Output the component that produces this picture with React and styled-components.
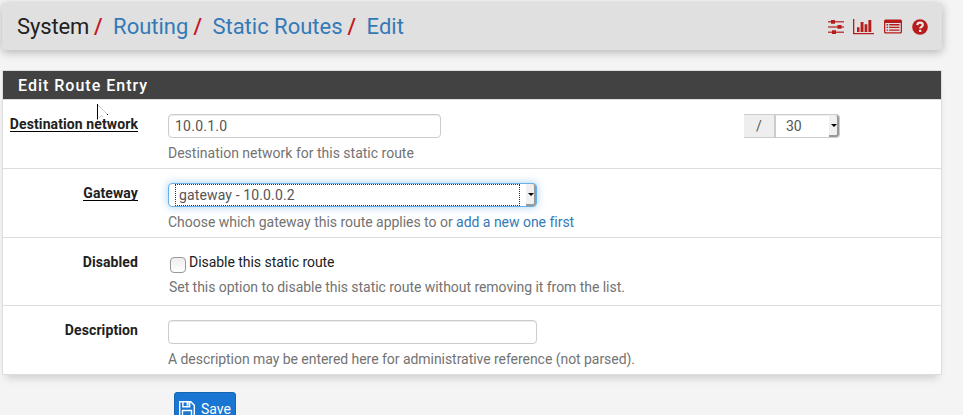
import React from "react";
import styled, { createGlobalStyle, css } from "styled-components";

const Global = createGlobalStyle`
  *, *::before, *::after { box-sizing: border-box; }
  html, body { margin: 0; height: 415px; overflow: hidden; background: #f4f4f4; }
  body { font: 14px/20px Roboto, sans-serif; color: #212121; }
`;

const Page = styled.main`
  position: relative;
  height: 415px;
  padding: 3px 21px 0 2px;
  overflow: hidden;
`;

const Header = styled.header`
  display: flex;
  align-items: center;
  justify-content: space-between;
  height: 47px;
  padding: 0 14px 0 15px;
  border-radius: 2px;
  background: #e0e0e0;
  box-shadow: 0 2px 10px rgba(0, 0, 0, 0.28);
`;

const Trail = styled.ol`
  display: flex;
  margin: 0;
  padding: 0;
  list-style: none;
  font-size: 22px;
  line-height: 30px;
  white-space: nowrap;
`;

const Crumb = styled.li`
  display: flex;
  color: #212121;

  &:first-child { letter-spacing: -0.15px; }

  & + &::before {
    content: "/";
    width: 24px;
    padding-left: 5px;
    color: #c4161c;
    font-weight: 500;
  }
`;

const Link = styled.a`
  color: #337ab7;
  text-decoration: none;
`;

const Shortcuts = styled.nav`
  display: flex;
  align-items: center;
  height: 16px;
  color: #b71c1c;
`;

const Shortcut = styled.a`
  display: flex;
  width: ${(p) => p.$width}px;
  margin-left: ${(p) => p.$gap}px;
  color: inherit;
`;

const Panel = styled.section`
  height: 305px;
  margin-top: 20px;
  border: 1px solid #ddd;
  background: #fff;
  box-shadow: 0 7px 8px -4px rgba(0, 0, 0, 0.16);
`;

const PanelTitle = styled.h2`
  height: 29px;
  margin: 0;
  padding: 0 15px;
  border-bottom: 1px solid #ddd;
  background: #424242;
  background-clip: padding-box;
  color: #fff;
  font-size: 16px;
  font-weight: 500;
  line-height: 29px;
  letter-spacing: 1px;
`;

const Row = styled.div`
  display: grid;
  grid-template-columns: 135px 1fr;
  column-gap: 30px;
  height: ${(p) => p.$height}px;
  padding-top: 14px;

  & + & { border-top: 1px solid #ddd; }
`;

const Label = styled.label`
  justify-self: end;
  height: 18px;
  color: #212121;
  font-weight: 700;
  line-height: 20px;
  letter-spacing: 0.1px;
  white-space: nowrap;
  ${(p) => p.$required && css`border-bottom: 1px solid #000;`}
`;

const Controls = styled.div`
  display: flex;
  gap: 303px;
`;

const boxed = css`
  height: 24px;
  border: 1px solid #ccc;
  border-radius: 4px;
  background: #fff;
  box-shadow: inset 0 1px 1px rgba(0, 0, 0, 0.075);
  color: #555;
  font: 14px/20px Roboto, sans-serif;
`;

const TextInput = styled.input`
  ${boxed}
  display: block;
  width: ${(p) => p.$width}px;
  padding: 1px 6px;
  letter-spacing: 0.25px;
  outline: none;
`;

const Help = styled.p`
  margin: ${(p) => (p.$inset ? "5px 0 0 1px" : "5px 0 0")};
  color: #737373;
  letter-spacing: ${(p) => p.$tracking || 0}px;
  white-space: nowrap;
`;

const MaskGroup = styled.div`
  display: flex;
`;

const Addon = styled.span`
  width: 30px;
  height: 24px;
  border: solid #ccc;
  border-width: 1px 0;
  background: #eee;
  color: #555;
  line-height: 22px;
  text-align: center;
`;

const Select = styled.div`
  ${boxed}
  display: flex;
  justify-content: space-between;
  width: ${(p) => p.$width}px;
  ${(p) => p.$joined && css`
    border-left-width: 2px;
    border-radius: 0 4px 4px 0;
  `}
  ${(p) => p.$focused && css`
    border-color: #66afe9;
    box-shadow: 0 0 8px rgba(102, 175, 233, 0.6);
  `}
`;

const Value = styled.span`
  padding-left: 10px;
  line-height: 22px;
`;

const FocusedValue = styled.span`
  width: 345px;
  height: 22px;
  margin-left: 6px;
  padding-left: 3px;
  border: 1px dotted #333;
  line-height: 21px;
  letter-spacing: 0.13px;
`;

const Arrow = styled.span`
  display: flex;
  align-items: center;
  justify-content: center;
  width: 10px;
  height: 22px;
  border: solid #999;
  border-width: 0 2px 2px 0;
  border-radius: 0 3px 3px 0;
  background: #f0f0f0;

  &::before {
    content: "";
    flex: none;
    margin-left: 1px;
    border: solid transparent;
    border-width: 3px 3px 0;
    border-top-color: #000;
  }
`;

const CheckLabel = styled.label`
  display: flex;
  height: 20px;
  padding-left: 2px;
  letter-spacing: -0.04px;
  white-space: nowrap;
`;

const Checkbox = styled.input`
  appearance: none;
  width: 16px;
  height: 16px;
  margin: 5px 3px 0 0;
  border: 1px solid #999;
  border-radius: 4px;
  background: linear-gradient(#eee, #fff);
`;

const SaveButton = styled.button`
  display: flex;
  align-items: center;
  gap: 6px;
  width: 62px;
  height: 34px;
  margin: 17px 0 0 172px;
  padding: 0 0 0 4px;
  border: 1px solid #1565b0;
  border-radius: 3px;
  background: #1976d2;
  color: #fff;
  font: 14px/20px Roboto, sans-serif;
`;

const Pointer = styled.svg`
  position: absolute;
  left: 97px;
  top: 103px;
`;

function Sliders() {
  return (
    <svg width="17" height="16" viewBox="0 0 17 16" fill="currentColor">
      <path d="M0 2h16v1.5H0zM0 7.2h16v1.5H0zM0 12.4h16v1.5H0z" opacity=".8" />
      <path d="M3 1h4v3.7H3zM9.5 6h4v3.7h-4zM4 11.2h4V15H4z" />
    </svg>
  );
}

function Chart() {
  return (
    <svg width="21" height="16" viewBox="0 0 21 16" fill="currentColor">
      <path d="M0 0h1.3v14H21v1.3H0zM4 8.2h2.5V13H4zM7.6 3h2.9v10H7.6zM11.6 5.2h2.7V13h-2.7zM15.4 1h2.9v12h-2.9z" />
    </svg>
  );
}

function ListPanel() {
  return (
    <svg width="18" height="16" viewBox="0 0 18 16" fill="currentColor">
      <path fillRule="evenodd" d="M1.5.5h15A1.5 1.5 0 0 1 18 2v11a1.5 1.5 0 0 1-1.5 1.5h-15A1.5 1.5 0 0 1 0 13V2A1.5 1.5 0 0 1 1.5.5ZM1.3 4v8.7c0 .3.2.5.5.5h14.4c.3 0 .5-.2.5-.5V4Z" />
      <path d="M2.6 5h1.5v1.4H2.6zm2.6 0h10.3v1.4H5.2zM2.6 7.7h1.5v1.4H2.6zm2.6 0h10.3v1.4H5.2zM2.6 10.4h1.5v1.4H2.6zm2.6 0h10.3v1.4H5.2z" />
    </svg>
  );
}

function Question() {
  return (
    <svg width="16" height="16" viewBox="0 0 16 16">
      <circle cx="8" cy="8" r="7.8" fill="currentColor" />
      <path d="M5.3 6.1C5.5 4.5 6.5 3.7 8 3.7c1.7 0 2.8.9 2.8 2.3 0 1.9-2.6 1.8-2.6 3.6" fill="none" stroke="#e8e8e8" strokeWidth="2.2" />
      <path d="M7 10.8h2.3V13H7z" fill="#e8e8e8" />
    </svg>
  );
}

function Floppy() {
  return (
    <svg width="16" height="16" viewBox="0 0 16 16" fill="none" stroke="currentColor" strokeWidth="1.4">
      <path d="M.7.7h11.1l3.5 3.5v11.1H.7zM3.5 15V9.5h9V15" />
      <path d="M3.9 1v4.8h6.8V1" />
      <path d="M8.6 1v3.6" strokeWidth="2" />
    </svg>
  );
}

export default function App() {
  return (
    <>
      <Global />
      <Page>
        <Header>
          <Trail>
            <Crumb>System</Crumb>
            <Crumb><Link>Routing</Link></Crumb>
            <Crumb><Link>Static Routes</Link></Crumb>
            <Crumb><Link>Edit</Link></Crumb>
          </Trail>
          <Shortcuts>
            <Shortcut $width={17} $gap={0}><Sliders /></Shortcut>
            <Shortcut $width={21} $gap={8}><Chart /></Shortcut>
            <Shortcut $width={18} $gap={10}><ListPanel /></Shortcut>
            <Shortcut $width={16} $gap={10}><Question /></Shortcut>
          </Shortcuts>
        </Header>

        <Panel>
          <PanelTitle>Edit Route Entry</PanelTitle>
          <Row $height={68}>
            <Label $required>Destination network</Label>
            <div>
              <Controls>
                <TextInput $width={273} defaultValue="10.0.1.0" />
                <MaskGroup>
                  <Addon>/</Addon>
                  <Select $width={66} $joined><Value>30</Value><Arrow /></Select>
                </MaskGroup>
              </Controls>
              <Help>Destination network for this static route</Help>
            </div>
          </Row>
          <Row $height={69}>
            <Label $required>Gateway</Label>
            <div>
              <Select $width={369} $focused><FocusedValue>gateway - 10.0.0.2</FocusedValue><Arrow /></Select>
              <Help $tracking={-0.025}>Choose which gateway this route applies to or <Link>add a new one first</Link></Help>
            </div>
          </Row>
          <Row $height={68}>
            <Label>Disabled</Label>
            <div>
              <CheckLabel><Checkbox type="checkbox" />Disable this static route</CheckLabel>
              <Help $inset $tracking={-0.045}>Set this option to disable this static route without removing it from the list.</Help>
            </div>
          </Row>
          <Row $height={69}>
            <Label>Description</Label>
            <div>
              <TextInput $width={369} />
              <Help $tracking={-0.045}>A description may be entered here for administrative reference (not parsed).</Help>
            </div>
          </Row>
        </Panel>

        <SaveButton><Floppy />Save</SaveButton>

        <Pointer width="13" height="18" viewBox="0 0 13 18">
          <path d="M.5 1v16l3.5-3 2 0L11 11.5Z" fill="#fff" fillOpacity=".8" />
          <path d="M.5 1v15.5" stroke="#000" />
          <path d="M1 2l9 9" stroke="#777" strokeWidth=".7" strokeDasharray="1 .6" />
          <path d="M10 11h1v1h-1z" />
          <path d="M2 15l2.5-2.5 1.5 2" fill="none" stroke="#aaa" strokeWidth=".6" />
        </Pointer>
      </Page>
    </>
  );
}
